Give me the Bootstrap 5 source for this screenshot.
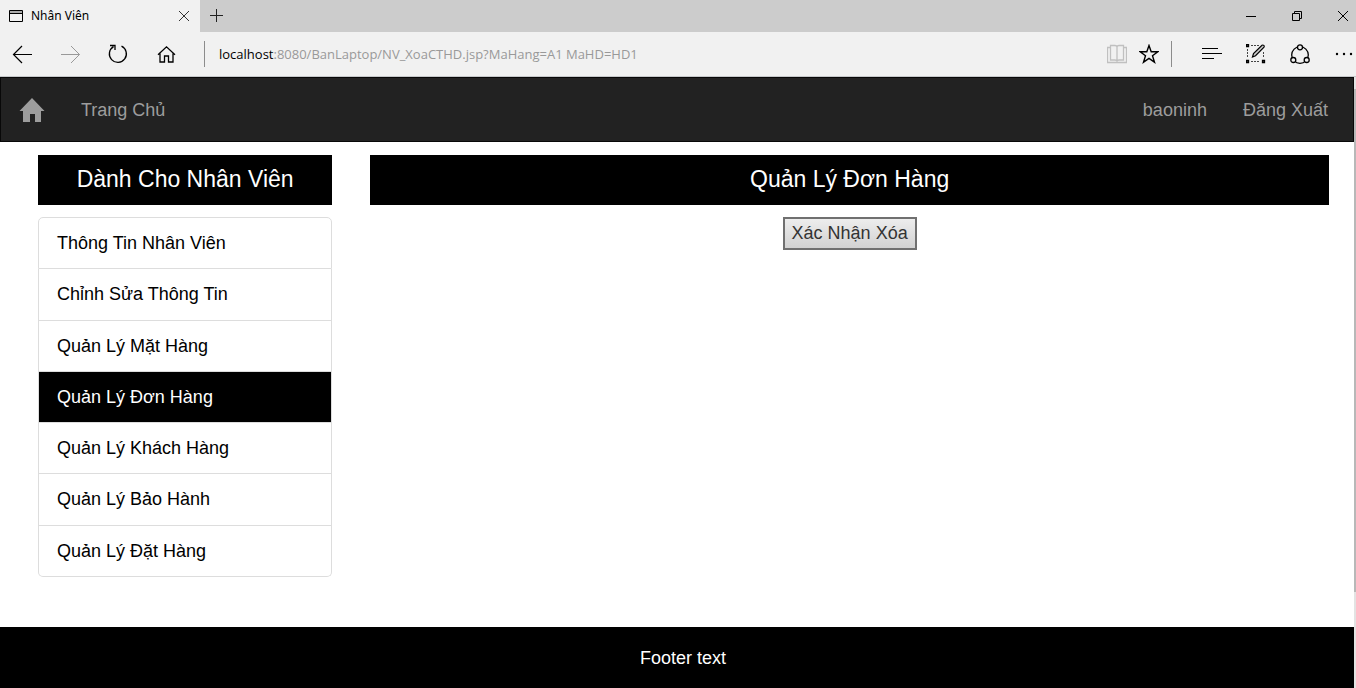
<!DOCTYPE html>
<html lang="vi">
<head>
<meta charset="utf-8">
<meta name="viewport" content="width=device-width, initial-scale=1">
<title>Nhân Viên</title>
<link href="https://cdn.jsdelivr.net/npm/bootstrap@5.3.0/dist/css/bootstrap.min.css" rel="stylesheet">
<style>
body { font-family: "Liberation Sans", Arial, sans-serif; font-size: 18px; line-height: 26px; color: #000; }
svg { display: block; fill: none; stroke: #000; flex: none; }
/* browser chrome */
.chrome-font { font-family: "Noto Sans", "Open Sans", sans-serif; font-size: 12px; line-height: 16px; }
.tab-strip { height: 32px; background: #ccc; }
.tab-open { width: 200px; background: #f1f1f1; padding: 0 11px 0 8px; }
.tab-open span { margin-left: 7px; }
.tool-row { height: 45px; background: #f1f1f1; border-bottom: 1px solid #c6c8ca; padding: 0 2px 0 12px; }
.plain-btn { border: 0; background: none; padding: 0; color: #000; }
.win-buttons { gap: 36px; padding-right: 7px; }
.nav-buttons { gap: 28px; margin-right: 28px; }
.split-line { width: 1px; height: 26px; background: #8c8c8c; }
.split-tools { margin: 0 26px 0 12px; }
.address { margin-left: 14px; font-family: "Open Sans", "Noto Sans", sans-serif; font-size: 13px; }
.address input { border: 0; background: none; padding: 0; color: #999; outline: 0; min-width: 0; }
/* page */
.page-navbar { height: 65px; background: #222; border: 1px solid #080808; padding: 0 25px 0 18px; }
.page-navbar .nav-link { color: #9d9d9d; padding: 0; }
.page-body { padding: 13px 6px 50px 19px; }
.page-body .row { --bs-gutter-x: 38px; margin: 0; }
.bar-title { background: #000; color: #fff; font-size: 23px; line-height: 26px; padding: 11px 0 13px; margin-bottom: 12px; }
.side-menu { --bs-list-group-border-color: #ddd; --bs-list-group-border-radius: 5px; --bs-list-group-color: #000; --bs-list-group-action-color: #000;
  --bs-list-group-active-bg: #000; --bs-list-group-active-border-color: #ddd; --bs-list-group-item-padding-x: 18px; --bs-list-group-item-padding-y: 12px; min-height: 360px; }
.side-menu .list-group-item.active { margin-top: 0; border-top-width: 0; }
.confirm-btn { border: 2px solid #707070; background: linear-gradient(#ededed, #d2d2d2); color: #333; padding: 2px 7px 3px; line-height: 24px; margin: 0 auto; }
.page-footer { background: #000; color: #fff; padding: 18px 0 17px 12px; }
.scroll-track { width: 2px; background: #e3e3e3; padding-top: 12px; }
.scroll-thumb { height: 84%; background: #b8b8b8; }
</style>
</head>
<body class="d-flex flex-column min-vh-100">

<header class="chrome-font">
  <div class="tab-strip d-flex">
    <div class="tab-open d-flex align-items-center">
      <svg width="16" height="16" viewBox="0 0 16 16" aria-hidden="true"><path d="M1.500 2.500h13v11h-13z"/><path d="M2 4h12" stroke="#aaa" stroke-width="2"/><path d="M2 5.500h12"/></svg>
      <span class="me-auto">Nhân Viên</span>
      <button class="plain-btn" aria-label="Close tab"><svg width="10" height="10" viewBox="0 0 10 10"><path d="M0 0l10 10M10 0L0 10" stroke="#333"/></svg></button>
    </div>
    <button class="plain-btn ps-2" aria-label="New tab"><svg width="16" height="14" viewBox="-2 0 16 14"><path d="M6.500 0v13M0 6.500h13" stroke="#222"/></svg></button>
    <div class="win-buttons d-flex align-items-center ms-auto">
      <button class="plain-btn" aria-label="Minimize"><svg width="10" height="10"><path d="M0 5.500h10"/></svg></button>
      <button class="plain-btn" aria-label="Restore"><svg width="10" height="11"><path d="M.5 2.500h7v7h-7zM2.500 2.500v-2h7v7h-2"/></svg></button>
      <button class="plain-btn" aria-label="Close"><svg width="11" height="11"><path d="M0 0l10 10M10 0L0 10"/></svg></button>
    </div>
  </div>
  <div class="tool-row d-flex align-items-center">
    <div class="nav-buttons d-flex align-items-center">
      <button class="plain-btn" aria-label="Back"><svg width="20" height="20" viewBox="0 0 20 20"><path d="M20 10.500H1.500M10 2L1.500 10.500 10 19" stroke-width="1.200"/></svg></button>
      <button class="plain-btn" aria-label="Forward"><svg width="20" height="20" viewBox="0 0 20 20"><path d="M1 10.500h18.500M11 2l8.500 8.500L11 19" stroke="#999"/></svg></button>
      <button class="plain-btn" aria-label="Refresh"><svg width="20" height="20" viewBox="0 0 20 20"><path d="M13.500 2.200A8.500 8.500 0 1 1 5.500 2.600M2 1.500h5v4.500" stroke-width="1.300"/></svg></button>
      <button class="plain-btn" aria-label="Home"><svg width="20" height="20" viewBox="0 0 20 20"><path d="M2 10.800L10.500 2.800l8.500 8M4 9.500v8.500h4.500v-6h4v6H17V9.500" stroke-width="1.300"/></svg></button>
    </div>
    <div class="split-line"></div>
    <div class="address d-flex flex-grow-1">
      <label for="url">localhost</label>
      <input id="url" type="text" class="flex-grow-1" value=":8080/BanLaptop/NV_XoaCTHD.jsp?MaHang=A1 MaHD=HD1">
    </div>
    <button class="plain-btn" aria-label="Reading view"><svg width="20" height="20" viewBox="0 0 20 20"><path d="M3.500 1.500H8q2 0 2 1.500 0-1.500 2-1.500h4.500V16H12q-2 0-2 1.500 0-1.500-2-1.500H3.500zM10 3v14M3.500 3.500h-3v15h19v-15h-3" stroke="#c0c0c0" stroke-width="1.300"/></svg></button>
    <button class="plain-btn ms-2 ps-1" aria-label="Favorite"><svg width="20" height="20" viewBox="0 0 20 20"><path d="M10 1.500l2.200 6.200h6.600l-5.300 4 2 6.500L10 14.400l-5.500 3.800 2-6.500-5.300-4h6.600z" stroke-width="1.400"/></svg></button>
    <div class="split-line split-tools"></div>
    <div class="d-flex align-items-center gap-4 ps-1">
      <button class="plain-btn" aria-label="Hub"><svg width="20" height="20" viewBox="0 0 20 20"><path d="M0 4.500h16M0 9.500h20M0 14.500h12" stroke-width="1.200"/></svg></button>
      <button class="plain-btn" aria-label="Web note"><svg width="20" height="20" viewBox="0 0 20 20"><path d="M5 1.500h8M1.500 5v9M17.500 8v6M5 17.500h9" stroke="#444" stroke-dasharray="2 1"/><path d="M.5.500h2v2h-2zM.5 16.500h2v2h-2zM16.500 16.500h2v2h-2z" fill="#777" stroke-width="1.300"/><path d="M6.500 13l1-3.500 8.500-8.300q1-.5 1.800.2.700.8.200 1.700l-8.500 8.600z" fill="#ccc" stroke-width="1.200"/></svg></button>
      <button class="plain-btn" aria-label="Share"><svg width="20" height="20" viewBox="0 0 20 20"><circle cx="10" cy="11" r="8.300" stroke-width="1.300"/><g fill="#f1f1f1" stroke-width="1.300"><circle cx="10" cy="3.300" r="2.500"/><circle cx="3.300" cy="16" r="2.500"/><circle cx="16.700" cy="16" r="2.500"/></g></svg></button>
      <button class="plain-btn" aria-label="More"><svg width="20" height="20" viewBox="0 0 20 20"><g fill="#000" stroke="none"><circle cx="3" cy="10" r="1.200"/><circle cx="10" cy="10" r="1.200"/><circle cx="17" cy="10" r="1.200"/></g></svg></button>
    </div>
  </div>
</header>

<div class="d-flex flex-grow-1">
  <div class="d-flex flex-column flex-grow-1">
    <nav class="page-navbar d-flex align-items-center">
      <a href="#" class="nav-link" aria-label="Trang Chủ"><svg width="26" height="24" viewBox="0 0 26 24"><path d="M13 0L25.500 13H22v11h-6v-8h-5v8H4V13H.5z" fill="#9d9d9d" stroke="none"/></svg></a>
      <a href="#" class="nav-link ms-4 ps-2 me-auto"><span class="ms-1">Trang Chủ</span></a>
      <a href="#" class="nav-link me-4">baoninh</a>
      <a href="#" class="nav-link ms-2 ps-1">Đăng Xuất</a>
    </nav>

    <main class="page-body">
      <div class="row">
        <aside class="col-3">
          <h1 class="bar-title text-center fw-normal">Dành Cho Nhân Viên</h1>
          <div class="list-group side-menu">
            <a href="#" class="list-group-item list-group-item-action flex-fill">Thông Tin Nhân Viên</a>
            <a href="#" class="list-group-item list-group-item-action flex-fill">Chỉnh Sửa Thông Tin</a>
            <a href="#" class="list-group-item list-group-item-action flex-fill">Quản Lý Mặt Hàng</a>
            <a href="#" class="list-group-item list-group-item-action flex-fill active" aria-current="page">Quản Lý Đơn Hàng</a>
            <a href="#" class="list-group-item list-group-item-action flex-fill">Quản Lý Khách Hàng</a>
            <a href="#" class="list-group-item list-group-item-action flex-fill">Quản Lý Bảo Hành</a>
            <a href="#" class="list-group-item list-group-item-action flex-fill">Quản Lý Đặt Hàng</a>
          </div>
        </aside>
        <section class="col-9">
          <h2 class="bar-title text-center fw-normal">Quản Lý Đơn Hàng</h2>
          <form class="d-flex"><button type="submit" class="confirm-btn">Xác Nhận Xóa</button></form>
        </section>
      </div>
    </main>

    <footer class="page-footer text-center flex-grow-1">Footer text</footer>
  </div>
  <div class="scroll-track" aria-hidden="true"><div class="scroll-thumb"></div></div>
</div>

<script src="https://cdn.jsdelivr.net/npm/bootstrap@5.3.0/dist/js/bootstrap.bundle.min.js"></script>
</body>
</html>
